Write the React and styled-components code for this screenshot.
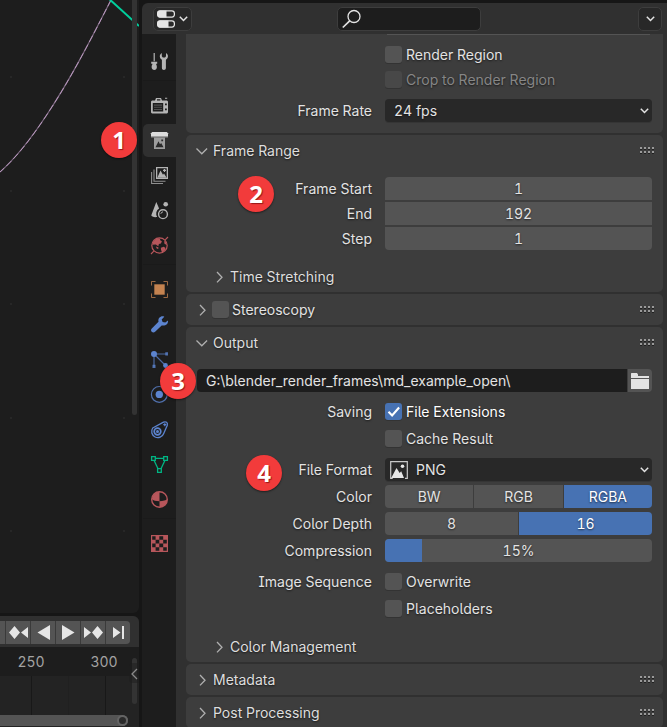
import React from "react";
import styled, { createGlobalStyle, css } from "styled-components";

const GlobalStyle = createGlobalStyle`
  *, *::before, *::after { box-sizing: border-box; }
  body {
    margin: 0;
    background: #161616;
    color: #e3e3e3;
    font-family: Inter, "Liberation Sans", sans-serif;
    font-feature-settings: "cv05", "cv08", "tnum";
    font-size: 14px;
    line-height: 23px;
  }
  button, input, select { font: inherit; font-feature-settings: inherit; color: inherit; margin: 0; }
  svg { display: block; }
`;

const shade = css`text-shadow: 0 1px 2px rgba(0, 0, 0, 0.6);`;

const Workspace = styled.div`
  position: relative;
  display: grid;
  grid-template-columns: minmax(0, 139fr) minmax(0, 525fr);
  gap: 3px;
  height: 100vh;
  overflow: hidden;
`;

/* ---------- Left side: graph editor and timeline ---------- */

const LeftColumn = styled.div`
  display: grid;
  grid-template-rows: minmax(0, 1fr) 111px;
  gap: 3px;
  min-width: 0;
`;

const GraphEditor = styled.section`
  position: relative;
  overflow: hidden;
  background: #1d1d1d;
  border-radius: 0 0 6px 0;
`;

const GraphCanvas = styled.svg`
  width: 100%;
  height: 100%;
`;

const VerticalScroll = styled.div`
  position: absolute;
  right: 2px;
  top: ${(p) => p.$top}px;
  width: 5px;
  height: ${(p) => p.$height};
  border-radius: ${(p) => (p.$top ? "3px" : "0 0 3px 3px")};
  background: #333333;
`;

const Timeline = styled.section`
  position: relative;
  display: flex;
  flex-direction: column;
  overflow: hidden;
  border-radius: 0 6px 0 0;
  background: #232323;
`;

const TimelineHeader = styled.div`
  display: flex;
  justify-content: flex-end;
  flex: none;
  height: 31px;
  padding: 5px 9px 3px 0;
  background: #303030;
`;

const Transport = styled.div`
  display: flex;
  flex: none;
  gap: 1px;
  overflow: hidden;
  border-radius: 0 4px 4px 0;
  background: #3a3a3a;
`;

const TransportButton = styled.button`
  display: grid;
  place-items: center;
  flex: none;
  width: 24px;
  height: 23px;
  padding: 0;
  border: 0;
  background: #545454;
  color: #e6e6e6;
`;

const Ruler = styled.div`
  display: flex;
  justify-content: flex-end;
  flex: none;
  gap: 33px;
  height: 29px;
  padding-right: 15px;
  background: #1d1d1d;
  color: #a3a3a3;
  line-height: 30px;
`;

const Tick = styled.span`
  width: 40px;
  text-align: center;
`;

const Track = styled.div`
  display: flex;
  justify-content: flex-end;
  flex: 1;
  padding-right: 33px;
`;

const TrackCell = styled.div`
  flex: none;
  width: 37px;
  border-right: 1px solid ${(p) => (p.$major ? "#181818" : "#202020")};
`;

const HorizontalScroll = styled.div`
  display: flex;
  justify-content: flex-end;
  flex: none;
  height: 11px;
  margin: 0 11px 1px 0;
  border-radius: 0 6px 6px 0;
  background: #545454;
`;

const ScrollHandle = styled.span`
  width: 11px;
  height: 11px;
  border: 2px solid #646464;
  border-radius: 50%;
  background: #2a2a2a;
`;

const RegionToggle = styled.button`
  position: absolute;
  right: 0;
  top: 47px;
  width: 10px;
  height: 20px;
  padding: 0;
  border: 0;
  border-radius: 4px 0 0 4px;
  background: rgba(30, 30, 30, 0.5);
  color: #8a8a8a;
`;

/* ---------- Properties editor ---------- */

const Properties = styled.section`
  display: flex;
  flex-direction: column;
  min-width: 0;
  margin-top: 3px;
  overflow: hidden;
  border-radius: 6px 0 0 0;
  background: #303030;
`;

const PropertiesHeader = styled.header`
  display: grid;
  grid-template-columns: minmax(0, 184fr) 144px minmax(0, 181fr);
  align-items: center;
  flex: none;
  height: 31px;
  padding: 0 5px 0 11px;
`;

const HeaderButton = styled.button`
  display: flex;
  align-items: center;
  justify-content: center;
  gap: 4px;
  width: ${(p) => p.$width}px;
  height: 24px;
  padding: 0;
  justify-self: ${(p) => p.$side || "start"};
  border: 1px solid #3d3d3d;
  border-radius: 5px;
  background: #282828;
  color: #e3e3e3;
`;

const SearchBox = styled.label`
  display: flex;
  align-items: center;
  height: 24px;
  padding: 0 4px;
  border: 1px solid #3d3d3d;
  border-radius: 5px;
  background: #1d1d1d;
`;

const SearchInput = styled.input`
  flex: 1;
  min-width: 0;
  height: 20px;
  border: 0;
  outline: 0;
  background: transparent;
`;

const PropertiesMain = styled.div`
  display: flex;
  flex: 1;
  min-height: 0;
`;

const TabBar = styled.nav`
  flex: none;
  width: 34px;
  padding: 11px 0 0 1px;
  background: #1d1d1d;
`;

const TabGroup = styled.div`
  display: flex;
  flex-direction: column;
  gap: 2px;
  & + & {
    margin-top: 2px;
    padding-top: 8px;
    border-top: 1px solid #1a1a1a;
  }
`;

const Tab = styled.button`
  display: grid;
  place-items: center;
  height: 33px;
  padding: 0;
  border: 0;
  border-radius: 5px 0 0 5px;
  background: ${(p) => (p.$active ? "#303030" : "transparent")};
  color: ${(p) => p.$color || "#b4b4b4"};
`;

const PanelList = styled.main`
  display: flex;
  flex: 1;
  flex-direction: column;
  gap: 2px;
  min-width: 0;
  padding: 0 4px 0 10px;
  overflow: hidden;
`;

const Panel = styled.section`
  flex: none;
  border-radius: ${(p) => (p.$continued ? "0 0 5px 5px" : "5px")};
  background: #3d3d3d;
`;

const PanelHeader = styled.div`
  display: flex;
  align-items: center;
  height: 31px;
  padding: 0 8px;
`;

const SubPanelHeader = styled(PanelHeader)`
  padding-left: 25px;
`;

const Disclosure = styled.button`
  display: flex;
  align-items: center;
  gap: 3px;
  padding: 0;
  border: 0;
  background: none;
  color: #dedede;
  ${shade}
`;

const Grip = styled.span`
  width: 15px;
  height: 7px;
  margin-left: auto;
  background-image:
    linear-gradient(90deg, #9a9a9a 2px, transparent 2px),
    linear-gradient(90deg, #202020 2px, transparent 2px),
    linear-gradient(90deg, #9a9a9a 2px, transparent 2px),
    linear-gradient(90deg, #202020 2px, transparent 2px);
  background-size: 4px 2px, 4px 1px, 4px 2px, 4px 1px;
  background-position: 0 0, 0 2px, 0 4px, 0 6px;
  background-repeat: repeat-x;
`;

const PanelBody = styled.div`
  display: flex;
  flex-direction: column;
  gap: 8px;
  padding: ${(p) => (p.$continued ? "0 11px 11px" : "11px")};
`;

const FieldGroup = styled.div`
  display: flex;
  flex-direction: column;
  gap: ${(p) => p.$gap}px;
`;

const FieldRow = styled.div`
  display: grid;
  grid-template-columns: minmax(0, 175fr) minmax(0, 267fr);
  column-gap: 13px;
  align-items: center;
  min-height: 23px;
`;

const ScrolledField = styled.span`
  grid-column: 2;
  height: 1px;
  margin: 0 2px;
  background: #545454;
`;

const ScrolledRow = styled(FieldRow)`
  min-height: 1px;
`;

const FieldLabel = styled.label`
  grid-column: 1;
  text-align: right;
  white-space: nowrap;
  ${shade}
`;

const NumberField = styled.input`
  width: 100%;
  height: 23px;
  padding: 0 8px;
  border: 0;
  border-radius: ${(p) => p.$radius};
  background: #545454;
  text-align: center;
  ${shade}
`;

const CheckLabel = styled.label`
  display: flex;
  align-items: center;
  grid-column: 2;
  gap: 4px;
  color: ${(p) => (p.$disabled ? "#868686" : p.$on ? "#ffffff" : "#e3e3e3")};
  white-space: nowrap;
  ${shade}
`;

const CheckBox = styled.input`
  appearance: none;
  flex: none;
  width: 17px;
  height: 17px;
  border-radius: 3px;
  background: ${(p) => (p.disabled ? "#484848" : "#545454")};
  box-shadow: 0 1px 0 #333333;
  &:checked {
    background: #4772b3
      url("data:image/svg+xml,%3Csvg xmlns='http://www.w3.org/2000/svg' viewBox='0 0 17 17'%3E%3Cpath d='M3.5 8.8l3.6 3.7 7-8' fill='none' stroke='white' stroke-width='2.1'/%3E%3C/svg%3E");
  }
`;

const Dropdown = styled.div`
  display: flex;
  align-items: center;
  grid-column: 2;
  height: 23px;
  padding: 0 3px 0 ${(p) => (p.$icon ? 5 : 9)}px;
  border-radius: 4px;
  background: #282828;
  box-shadow: 0 1px 0 #353535;
`;

const Select = styled.select`
  appearance: none;
  flex: 1;
  min-width: 0;
  height: 23px;
  padding: 0 0 0 ${(p) => (p.$icon ? 8 : 0)}px;
  border: 0;
  outline: 0;
  background: transparent;
  ${shade}
`;

const Segments = styled.div`
  display: grid;
  grid-auto-flow: column;
  grid-auto-columns: minmax(0, 1fr);
  gap: 1px;
  grid-column: 2;
  overflow: hidden;
  border-radius: 4px;
  background: #3d3d3d;
`;

const Segment = styled.button`
  height: 23px;
  padding: 0;
  border: 0;
  background: ${(p) => (p["aria-pressed"] ? "#4772b3" : "#545454")};
  color: ${(p) => (p["aria-pressed"] ? "#ffffff" : "#e3e3e3")};
  ${shade}
`;

const Slider = styled.div`
  display: grid;
  grid-column: 2;
  overflow: hidden;
  border-radius: 4px;
  background: #545454;
`;

const SliderRange = styled.input`
  grid-area: 1 / 1;
  appearance: none;
  width: 100%;
  height: 23px;
  background: linear-gradient(90deg, #4772b3 14%, transparent 14%);
  &::-webkit-slider-thumb { appearance: none; width: 1px; height: 23px; }
`;

const SliderValue = styled.output`
  grid-area: 1 / 1;
  text-align: center;
  pointer-events: none;
  ${shade}
`;

const PathRow = styled.div`
  display: flex;
  gap: 1px;
`;

const PathInput = styled.input`
  flex: 1;
  min-width: 0;
  height: 23px;
  padding: 0 9px;
  border: 0;
  outline: 0;
  border-radius: 4px 0 0 4px;
  background: #1d1d1d;
`;

const BrowseButton = styled.button`
  display: grid;
  place-items: center;
  width: 24px;
  height: 23px;
  padding: 0;
  border: 0;
  border-radius: 0 4px 4px 0;
  background: #545454;
`;

const Badge = styled.span`
  position: absolute;
  left: ${(p) => p.$x}px;
  top: ${(p) => p.$y}px;
  width: 36px;
  height: 36px;
  border-radius: 50%;
  background: #f23b3b;
  box-shadow: 0 1px 2px rgba(0, 0, 0, 0.5);
  color: #ffffff;
  font: 700 24px/36px "Noto Sans", "Open Sans", sans-serif;
  text-align: center;
  text-shadow: 1px 1px 1px rgba(90, 0, 0, 0.6);
`;

/* ---------- Icons ---------- */

const Icon = ({ children, size = 17 }) => (
  <svg width={size} height={size} viewBox={`0 0 ${size} ${size}`} fill="currentColor" overflow="visible" aria-hidden="true">
    {children}
  </svg>
);

const Chevron = ({ open }) => (
  <svg width="16" height="16" viewBox="0 0 16 16" fill="none" stroke="#b0b0b0" strokeWidth="1.3" aria-hidden="true">
    <path d={open ? "M2.5 5.5l5.3 5.3 5.3-5.3" : "M6 3l5 5.2L6 13.4"} />
  </svg>
);

const DropArrow = () => (
  <svg width="9" height="7" viewBox="0 0 9 7" fill="none" stroke="#e3e3e3" strokeWidth="1.5" aria-hidden="true">
    <path d="M.8 1.8l3.7 3.7 3.7-3.7" />
  </svg>
);

const ToolIcon = () => (
  <Icon>
    <path d="M2.6 0h1.2v8.200H2.600zM.200 8.800h6v2H.200zM1.400 10.800h3.800c-.3.9.7 1.400.7 3.200 0 1.900-1.200 3-2.600 3s-2.700-1.100-2.700-3c0-1.800 1-2.300.8-3.200z" />
    <path d="M10.800 0C8.200 1.400 8.100 5.300 10.900 6.700V15c0 1.100.8 2 2 2s2-.9 2-2V6.700C17.700 5.300 17.600 1.400 15 0v3.300l-1 1.100h-2.200l-1-1.100z" />
  </Icon>
);
const RenderIcon = () => (
  <Icon>
    <path fillRule="evenodd" d="M1 3.500h3L5 1h5l1 2.500h5l1 1V15.500l-1 1H1l-1-1v-11zM1.800 6v8.500h10.400V6zM6 2.200v1.200h3.300V2.200zM14 6.500v1.800h1.800V6.500zM14 11.500v1.800h1.800v-1.800z" />
    <path d="M3 7.500h8v1.200H3zM3 9.800h8v1H3zM3 12h8v1H3z" opacity=".35" />
    <path d="M14 .7h2.200v1H14z" />
  </Icon>
);
const OutputIcon = () => (
  <Icon>
    <path d="M1.200 0h14.600L17 1.200V5H0V1.200z" fill="#dcdcdc" />
    <path d="M0 4.200h17v1.300H0z" fill="#8b8b8b" />
    <path d="M3 5.500h11V17H3z" fill="#9d9d9d" />
    <path d="M4.500 15.300l3-6 1.500 3 1.200-1.300 2.300 4.300z" fill="#2a2a2a" />
    <path d="M10.300 7.500h1.800v1.800h-1.800z" fill="#2a2a2a" />
  </Icon>
);
const ViewLayerIcon = () => (
  <Icon>
    <path fillRule="evenodd" d="M5 0h12v12H5zM6.300 1.300v9.400h9.400V1.300z" />
    <path d="M6.300 10.700L9.500 3.500l2.500 4.300 1-1.300 2.700 4.200z" />
    <path d="M12 3.300h3M13.500 1.900v3" stroke="currentColor" strokeWidth="1.200" />
    <path d="M3 2.500v11.700h11.500M.6 5v11.500H12" fill="none" stroke="currentColor" strokeWidth="1.100" opacity=".75" />
  </Icon>
);
const SceneIcon = () => (
  <Icon>
    <path d="M5.300 0l2.800 6.500A6 6 0 0 0 6.200 15C3.500 15.500.3 14.800.3 13.300z" />
    <circle cx="14.700" cy="2.300" r="2.300" />
    <circle cx="12" cy="12.200" r="4.400" fill="none" stroke="currentColor" strokeWidth="1.400" />
    <path d="M9.800 11.800A2.600 2.600 0 0 1 12 9.800" fill="none" stroke="currentColor" strokeWidth="1" />
  </Icon>
);
const WorldIcon = () => (
  <Icon>
    <circle cx="8.500" cy="8.500" r="7.700" fill="none" stroke="currentColor" strokeWidth="1.200" />
    <path d="M2.500 4L6 1.300l3.500.2L8.900 3l2 1.300-1 2.200-2 .6-.6 2.100L4.800 7.500 1.200 7.800zM5 9.500l2.500 1-.3 1.500-1.500-.5zM9.800 10.800l3-1 1.700 1.200-.9 3-2.600 1.500-.9-2.500zM13.300 3.200l2 2.500.6 2.500-2.600-1.700z" />
    <path d="M14.200 2.800L17 0M0 17l2.800-2.800" stroke="currentColor" strokeWidth="1.200" />
  </Icon>
);
const ObjectIcon = () => (
  <Icon>
    <path d="M3.300 3.300h10.400v10.400H3.300z" />
    <path d="M.5 4.500v-4h4M12.500.5h4v4M16.500 12.500v4h-4M4.500 16.500h-4v-4" fill="none" stroke="currentColor" opacity=".75" />
  </Icon>
);
const ModifierIcon = () => (
  <Icon>
    <path d="M13.300.7C10.100-.6 6.600 2 7.500 5.800L.8 12.400c-1 1-1 2.400-.1 3.400 1 1 2.400 1 3.400 0l6.600-6.400c3.500.9 6.800-1.400 6.300-5L14.300 6.600l-2.700-.5-.9-2.700z" />
  </Icon>
);
const ParticlesIcon = () => (
  <Icon>
    <circle cx="3" cy="3" r="3" />
    <circle cx="14.500" cy="14.500" r="2.400" />
    <path d="M3 3h12.500M3 3v12.500M3 3l11 11" stroke="currentColor" strokeWidth="1.200" opacity=".75" />
    <path d="M14.300 1.300H17v3.200h-2.700zM1.500 13.800h3V17h-3z" opacity=".8" />
  </Icon>
);
const PhysicsIcon = () => (
  <Icon>
    <circle cx="8.300" cy="8.400" r="7.900" fill="none" stroke="currentColor" strokeWidth="1.200" opacity=".8" />
    <circle cx="8.300" cy="8.400" r="3.700" />
  </Icon>
);
const ConstraintIcon = () => (
  <Icon>
    <path d="M1.700 7L12.500 1.200c2.500-1.100 4.400.5 3.800 3L12.700 12.500A6.200 6.200 0 1 1 1.700 7z" fill="none" stroke="currentColor" strokeWidth="1.300" />
    <circle cx="6.500" cy="10.500" r="3.300" fill="none" stroke="currentColor" strokeWidth="1.700" />
    <circle cx="6.500" cy="10.500" r="1.500" />
    <path d="M12.300 3.700h3M13.800 2.200v3" stroke="currentColor" strokeWidth="1.200" />
  </Icon>
);
const DataIcon = () => (
  <Icon>
    <path d="M4.500 2.300h8M3 4.300l4 8.400M14 4.300l-4 8.400M.6.600h3.700v3.700H.6zM12.700.6h3.700v3.700h-3.700zM6.600 12.700h3.700v3.700H6.600z" fill="none" stroke="currentColor" strokeWidth="1.300" />
  </Icon>
);
const MaterialIcon = () => (
  <Icon>
    <circle cx="8.500" cy="8.500" r="7.800" fill="none" stroke="currentColor" strokeWidth="1.400" />
    <path d="M8.500.8v9.400C5 10.200 2 9.600.8 8A7.700 7.700 0 0 1 8.500.8zM8.500 10.200c3.500 0 6.700-.8 7.700-2.200.3 4.500-3.200 8.200-7.700 8.200z" />
  </Icon>
);
const TextureIcon = () => (
  <Icon>
    <path d="M.6.600h15.800v15.800H.6z" fill="none" stroke="currentColor" strokeWidth="1.200" />
    <path d="M4.600 1h3.700v3.700H4.600zM12.200 1H16v3.700h-3.800zM1 4.700h3.600v3.700H1zM8.300 4.700h3.900v3.700H8.300zM4.600 8.400h3.700v3.800H4.600zM12.200 8.400H16v3.800h-3.800zM1 12.200h3.600V16H1zM8.300 12.200h3.900V16H8.300z" />
  </Icon>
);
const EditorIcon = () => (
  <svg width="18" height="18" viewBox="0 0 18 18" aria-hidden="true">
    <rect x=".6" y=".9" width="16.800" height="6.200" rx="2.500" fill="#282828" stroke="#e6e6e6" strokeWidth="1.200" />
    <path d="M3 .5h6.500v7H3A2.500 2.500 0 0 1 .3 5V3A2.500 2.500 0 0 1 3 .5z" fill="#e6e6e6" />
    <rect x=".6" y="10.900" width="16.800" height="6.200" rx="2.500" fill="#282828" stroke="#e6e6e6" strokeWidth="1.200" />
    <path d="M3 10.500h8.500v7H3A2.500 2.500 0 0 1 .3 15v-2A2.500 2.500 0 0 1 3 10.500z" fill="#e6e6e6" />
  </svg>
);
const SearchIcon = () => (
  <svg width="20" height="20" viewBox="0 0 20 20" fill="none" stroke="#e3e3e3" aria-hidden="true">
    <circle cx="12" cy="7.500" r="6" strokeWidth="1.300" />
    <path d="M7.700 11.800L.8 18.500" strokeWidth="1.700" />
  </svg>
);
const ImageIcon = () => (
  <svg width="18" height="18" viewBox="0 0 18 18" aria-hidden="true">
    <path d="M3.500.7H.7v16.600h2M14 .7h3.300v16.600H15M3.500.7H14" fill="none" stroke="#c8c8c8" strokeWidth="1.200" />
    <path d="M1.200 17L6.500 7l3.200 5 1.500-1.700L14 17z" fill="#e6e6e6" />
    <circle cx="12.500" cy="5.300" r="1.800" fill="#e6e6e6" />
  </svg>
);
const FolderIcon = () => (
  <svg width="18" height="16" viewBox="0 0 18 16" fill="#e3e3e3" aria-hidden="true">
    <path d="M0 .5L.5 0h5.500l1 1.500V3h11v2H0zM0 6h18v10H0z" />
  </svg>
);

const transport = [
  { name: "Jump to startpoint", art: <path d="M15 3v11L7.500 8.500zM4 2h2v13H4z" /> },
  { name: "Jump to previous keyframe", art: <path d="M5.500 2l5.500 6.500L5.500 15 0 8.500zM19 3v11l-7-5.500z" /> },
  { name: "Play reversed", art: <path d="M16 1v15L3.500 8.500z" /> },
  { name: "Play", art: <path d="M3 1v15l12.500-7.500z" /> },
  { name: "Jump to next keyframe", art: <path d="M13.500 2L19 8.500 13.500 15 8 8.500zM0 3v11l7-5.500z" /> },
  { name: "Jump to endpoint", art: <path d="M4 3v11l7.500-5.500zM13 2h2v13h-2z" /> },
];

const tabGroups = [
  [{ name: "Tool", Art: ToolIcon }],
  [
    { name: "Render", Art: RenderIcon },
    { name: "Output", Art: OutputIcon, active: true },
    { name: "View Layer", Art: ViewLayerIcon },
    { name: "Scene", Art: SceneIcon },
    { name: "World", Art: WorldIcon, color: "#b7565b" },
  ],
  [
    { name: "Object", Art: ObjectIcon, color: "#c58350" },
    { name: "Modifiers", Art: ModifierIcon, color: "#5c84cf" },
    { name: "Particles", Art: ParticlesIcon, color: "#5c84cf" },
    { name: "Physics", Art: PhysicsIcon, color: "#5c84cf" },
    { name: "Constraints", Art: ConstraintIcon, color: "#5c84cf" },
    { name: "Data", Art: DataIcon, color: "#00b583" },
    { name: "Material", Art: MaterialIcon, color: "#b7565b" },
  ],
  [{ name: "Texture", Art: TextureIcon, color: "#b7565b" }],
];

const Title = ({ children, open, grip = true, extra, as: Header = PanelHeader }) => (
  <Header>
    <Disclosure type="button" aria-expanded={!!open}>
      <Chevron open={open} />
      {!extra && children}
    </Disclosure>
    {extra}
    {grip && <Grip />}
  </Header>
);

const Check = ({ label, disabled, on }) => (
  <CheckLabel $disabled={disabled} $on={on}>
    <CheckBox type="checkbox" disabled={disabled} defaultChecked={on} />
    {label}
  </CheckLabel>
);

const Choice = ({ options, value, label }) => (
  <Segments role="group" aria-label={label}>
    {options.map((o) => (
      <Segment key={o} type="button" aria-pressed={o === value}>{o}</Segment>
    ))}
  </Segments>
);

const StereoLabel = styled(CheckLabel)`
  margin-left: 2px;
  gap: 3px;
`;

const frameFields = [
  { id: "start", label: "Frame Start", value: "1", radius: "4px 4px 0 0" },
  { id: "end", label: "End", value: "192", radius: "0" },
  { id: "step", label: "Step", value: "1", radius: "0 0 4px 4px" },
];

export default function App() {
  return (
    <>
      <GlobalStyle />
      <Workspace>
        <LeftColumn>
          <GraphEditor aria-label="Graph editor">
            <GraphCanvas viewBox="0 0 139 613" preserveAspectRatio="xMinYMin slice">
              <g fill="#2b2b2b">
                {[77, 191, 304, 418, 531].map((y) =>
                  [11, 124].map((x) => <circle key={`${x}-${y}`} cx={x} cy={y} r="1" />)
                )}
              </g>
              <path d="M111 0C88 45 70 80 46 116 32 137 18 156 0 172" fill="none" stroke="#7b677f" strokeWidth="1.200" />
              <path d="M111 0C88 45 70 80 46 116 32 137 18 156 0 172" fill="none" stroke="#b898bd" strokeWidth="1" strokeDasharray="7 3" />
              <path d="M107-3L139 26" stroke="#00cf9d" strokeWidth="2" />
            </GraphCanvas>
            <VerticalScroll $top={0} $height="415px" />
          </GraphEditor>
          <Timeline aria-label="Timeline">
            <TimelineHeader>
              <Transport>
                {transport.map(({ name, art }) => (
                  <TransportButton key={name} type="button" aria-label={name}>
                    <svg width="19" height="17" viewBox="0 0 19 17" fill="currentColor">{art}</svg>
                  </TransportButton>
                ))}
              </Transport>
            </TimelineHeader>
            <Ruler>
              <Tick>250</Tick>
              <Tick>300</Tick>
            </Ruler>
            <Track>
              <TrackCell $major />
              <TrackCell />
              <TrackCell $major />
            </Track>
            <HorizontalScroll><ScrollHandle /></HorizontalScroll>
            <VerticalScroll $top={42} $height="46px" />
            <RegionToggle type="button" aria-label="Show region">
              <svg width="10" height="20" viewBox="0 0 10 20" fill="none" stroke="currentColor" strokeWidth="1.300">
                <path d="M8 6L3 11l5 5" />
              </svg>
            </RegionToggle>
          </Timeline>
        </LeftColumn>

        <Properties aria-label="Properties">
          <PropertiesHeader>
            <HeaderButton type="button" $width={39} aria-label="Editor type">
              <EditorIcon />
              <DropArrow />
            </HeaderButton>
            <SearchBox>
              <SearchIcon />
              <SearchInput type="text" aria-label="Search" />
            </SearchBox>
            <HeaderButton type="button" $width={24} $side="end" aria-label="Options">
              <DropArrow />
            </HeaderButton>
          </PropertiesHeader>

          <PropertiesMain>
            <TabBar aria-label="Properties tabs">
              {tabGroups.map((group) => (
                <TabGroup key={group[0].name}>
                  {group.map(({ name, Art, color, active }) => (
                    <Tab key={name} type="button" aria-label={name} $color={color} $active={active}>
                      <Art />
                    </Tab>
                  ))}
                </TabGroup>
              ))}
            </TabBar>

            <PanelList>
              <Panel $continued>
                <PanelBody $continued>
                  <FieldGroup $gap={2}>
                    <ScrolledRow><ScrolledField /></ScrolledRow>
                  </FieldGroup>
                  <FieldGroup $gap={2}>
                    <FieldRow><Check label="Render Region" /></FieldRow>
                    <FieldRow><Check label="Crop to Render Region" disabled /></FieldRow>
                  </FieldGroup>
                  <FieldRow>
                    <FieldLabel htmlFor="rate">Frame Rate</FieldLabel>
                    <Dropdown>
                      <Select id="rate"><option>24 fps</option></Select>
                      <DropArrow />
                    </Dropdown>
                  </FieldRow>
                </PanelBody>
              </Panel>

              <Panel>
                <Title open>Frame Range</Title>
                <PanelBody>
                  <FieldGroup $gap={2}>
                    {frameFields.map((f) => (
                      <FieldRow key={f.id}>
                        <FieldLabel htmlFor={f.id}>{f.label}</FieldLabel>
                        <NumberField id={f.id} type="text" defaultValue={f.value} $radius={f.radius} />
                      </FieldRow>
                    ))}
                  </FieldGroup>
                </PanelBody>
                <Title as={SubPanelHeader} grip={false}>Time Stretching</Title>
              </Panel>

              <Panel>
                <Title
                  extra={
                    <StereoLabel>
                      <CheckBox type="checkbox" />
                      Stereoscopy
                    </StereoLabel>
                  }
                />
              </Panel>

              <Panel>
                <Title open>Output</Title>
                <PanelBody>
                  <PathRow>
                    <PathInput type="text" aria-label="Output path" defaultValue={"G:\\blender_render_frames\\md_example_open\\"} />
                    <BrowseButton type="button" aria-label="Browse"><FolderIcon /></BrowseButton>
                  </PathRow>
                  <FieldGroup $gap={4}>
                    <FieldRow>
                      <FieldLabel as="span">Saving</FieldLabel>
                      <Check label="File Extensions" on />
                    </FieldRow>
                    <FieldRow><Check label="Cache Result" /></FieldRow>
                  </FieldGroup>
                  <FieldGroup $gap={4}>
                    <FieldRow>
                      <FieldLabel htmlFor="format">File Format</FieldLabel>
                      <Dropdown $icon>
                        <ImageIcon />
                        <Select id="format" $icon><option>PNG</option></Select>
                        <DropArrow />
                      </Dropdown>
                    </FieldRow>
                    <FieldRow>
                      <FieldLabel as="span">Color</FieldLabel>
                      <Choice label="Color" options={["BW", "RGB", "RGBA"]} value="RGBA" />
                    </FieldRow>
                    <FieldRow>
                      <FieldLabel as="span">Color Depth</FieldLabel>
                      <Choice label="Color Depth" options={["8", "16"]} value="16" />
                    </FieldRow>
                    <FieldRow>
                      <FieldLabel htmlFor="compression">Compression</FieldLabel>
                      <Slider>
                        <SliderRange id="compression" type="range" min="0" max="100" defaultValue="15" />
                        <SliderValue htmlFor="compression">15%</SliderValue>
                      </Slider>
                    </FieldRow>
                  </FieldGroup>
                  <FieldGroup $gap={4}>
                    <FieldRow>
                      <FieldLabel as="span">Image Sequence</FieldLabel>
                      <Check label="Overwrite" />
                    </FieldRow>
                    <FieldRow><Check label="Placeholders" /></FieldRow>
                  </FieldGroup>
                </PanelBody>
                <Title as={SubPanelHeader} grip={false}>Color Management</Title>
              </Panel>

              <Panel><Title>Metadata</Title></Panel>
              <Panel><Title>Post Processing</Title></Panel>
            </PanelList>
          </PropertiesMain>
        </Properties>

        <Badge $x={101} $y={122}>1</Badge>
        <Badge $x={238} $y={176}>2</Badge>
        <Badge $x={160} $y={363}>3</Badge>
        <Badge $x={246} $y={455}>4</Badge>
      </Workspace>
    </>
  );
}
